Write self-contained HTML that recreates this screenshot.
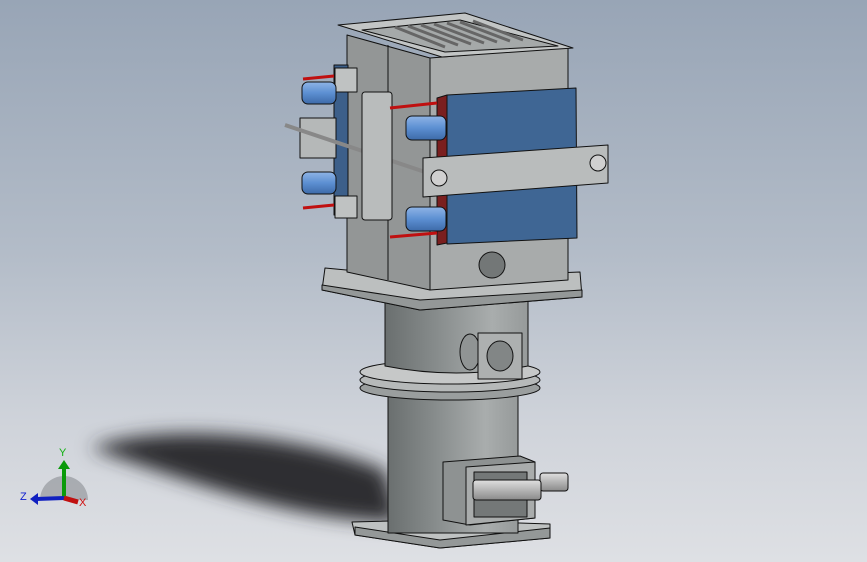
<!DOCTYPE html>
<html><head><style>
html,body{margin:0;padding:0;width:867px;height:562px;overflow:hidden}
body{background:linear-gradient(180deg,#98a5b6 0%,#b3bcc8 45%,#cfd3da 75%,#dee0e4 100%);font-family:"Liberation Sans",sans-serif}
svg{position:absolute;left:0;top:0}
</style></head><body>
<svg width="867" height="562" viewBox="0 0 867 562">
<defs>
<filter id="bl" x="-30%" y="-60%" width="160%" height="220%"><feGaussianBlur stdDeviation="9"/></filter>
<linearGradient id="cyl" x1="0" x2="1"><stop offset="0" stop-color="#6a6f6f"/><stop offset="0.35" stop-color="#868b8b"/><stop offset="0.75" stop-color="#a9adad"/><stop offset="1" stop-color="#969a9a"/></linearGradient>
<linearGradient id="rod" x1="0" y1="0" x2="0" y2="1"><stop offset="0" stop-color="#e0e0e0"/><stop offset="1" stop-color="#8a8a8a"/></linearGradient>
<linearGradient id="pipe" x1="0" y1="0" x2="0" y2="1"><stop offset="0" stop-color="#8fb4e6"/><stop offset="0.5" stop-color="#5c8fd2"/><stop offset="1" stop-color="#3d6aa8"/></linearGradient>
</defs>
<path d="M90 448 C150 425 280 428 385 470 L400 522 C300 522 200 485 90 448Z" fill="#2d2f33" filter="url(#bl)"/>
<g stroke="#111" stroke-width="1" stroke-linejoin="round">
<polygon points="352,522 430,520 550,524 550,538 440,548 355,535" fill="#bfc2c2"/>
<polygon points="355,527 440,540 550,528 550,538 440,548 355,535" fill="#949898"/>
<rect x="388" y="390" width="130" height="143" fill="url(#cyl)"/>
<polygon points="443,462 520,456 535,462 535,518 470,525 443,520" fill="#8e9292"/>
<polygon points="466,467 535,462 535,518 466,525" fill="#a9acac"/>
<rect x="474" y="472" width="53" height="45" fill="#747878"/>
<rect x="540" y="473" width="28" height="18" rx="3" fill="url(#rod)"/>
<rect x="473" y="480" width="68" height="20" rx="3" fill="url(#rod)"/>
<ellipse cx="450" cy="388" rx="90" ry="12" fill="#9a9e9e"/>
<ellipse cx="450" cy="380" rx="90" ry="12" fill="#b6b9b9"/>
<ellipse cx="450" cy="372" rx="90" ry="12" fill="#c6c8c8"/>
<path d="M385 300 L528 300 L528 366 Q456 380 385 366Z" fill="url(#cyl)"/>
<ellipse cx="470" cy="352" rx="10" ry="18" fill="#909494"/>
<rect x="478" y="333" width="44" height="46" fill="#adb0b0"/>
<ellipse cx="500" cy="356" rx="13" ry="15" fill="#828686"/>
<polygon points="325,268 430,278 580,272 582,297 420,310 322,290" fill="#bcbfbf"/>
<polygon points="322,285 420,300 582,290 582,297 420,310 322,290" fill="#949898"/>
<polygon points="347,35 430,58 430,290 347,272" fill="#939696"/>
<line x1="388" y1="45" x2="388" y2="280"/>
<polygon points="430,58 568,47 568,280 430,290" fill="#a8abab"/>
<polygon points="338,25 465,13 573,48 442,57" fill="#c2c5c5"/>
<polygon points="362,30 460,20 558,46 445,52" fill="#a5a9a9"/>
<g stroke="#666" stroke-width="3">
<line x1="395" y1="27" x2="445" y2="47"/><line x1="408" y1="26" x2="458" y2="45"/><line x1="421" y1="25" x2="471" y2="44"/><line x1="434" y1="24" x2="484" y2="43"/><line x1="447" y1="23" x2="497" y2="42"/><line x1="460" y1="22" x2="510" y2="41"/><line x1="473" y1="21" x2="523" y2="40"/>
</g>
<circle cx="492" cy="265" r="13" fill="#737777"/>
<rect x="334" y="65" width="14" height="150" fill="#3c5f8a"/>
<rect x="335" y="68" width="22" height="24" fill="#bfc2c2"/>
<rect x="335" y="196" width="22" height="22" fill="#bfc2c2"/>
<rect x="300" y="118" width="36" height="40" fill="#b5b8b8"/>
<polygon points="437,98 447,95 447,243 437,245" fill="#7a1f1f"/>
<polygon points="447,95 576,88 577,238 447,244" fill="#3f6694"/>
<line x1="285" y1="125" x2="425" y2="172" stroke="#888" stroke-width="4"/>
<rect x="362" y="92" width="30" height="128" rx="3" fill="#b9bcbc"/>
<polygon points="423,158 608,145 608,183 423,197" fill="#b9bcbc"/>
<circle cx="439" cy="178" r="8" fill="#d0d0d0"/>
<circle cx="598" cy="163" r="8" fill="#d0d0d0"/>
<rect x="302" y="82" width="34" height="22" rx="6" fill="url(#pipe)"/>
<rect x="302" y="172" width="34" height="22" rx="6" fill="url(#pipe)"/>
<rect x="406" y="116" width="40" height="24" rx="6" fill="url(#pipe)"/>
<rect x="406" y="207" width="40" height="24" rx="6" fill="url(#pipe)"/>
</g>
<g stroke="#c01010" stroke-width="3">
<line x1="303" y1="79" x2="334" y2="76"/><line x1="303" y1="208" x2="334" y2="205"/>
<line x1="390" y1="108" x2="437" y2="103"/><line x1="390" y1="237" x2="437" y2="233"/>
</g>
<path d="M40 500 A24 24 0 0 1 88 500Z" fill="#8a8e92" opacity="0.6"/>
<line x1="64" y1="498" x2="64" y2="467" stroke="#0a9a0a" stroke-width="4"/>
<polygon points="58,469 64,460 70,469" fill="#0a9a0a"/>
<line x1="64" y1="498" x2="36" y2="499" stroke="#1020c0" stroke-width="4"/>
<polygon points="38,493 30,499 38,505" fill="#1020c0"/>
<line x1="64" y1="498" x2="78" y2="502" stroke="#c01010" stroke-width="5"/>
<text x="59" y="456" font-size="11" fill="#10b010">Y</text>
<text x="20" y="500" font-size="11" fill="#1020d0">Z</text>
<text x="79" y="506" font-size="11" fill="#d01010">X</text>
</svg>
</body></html>
